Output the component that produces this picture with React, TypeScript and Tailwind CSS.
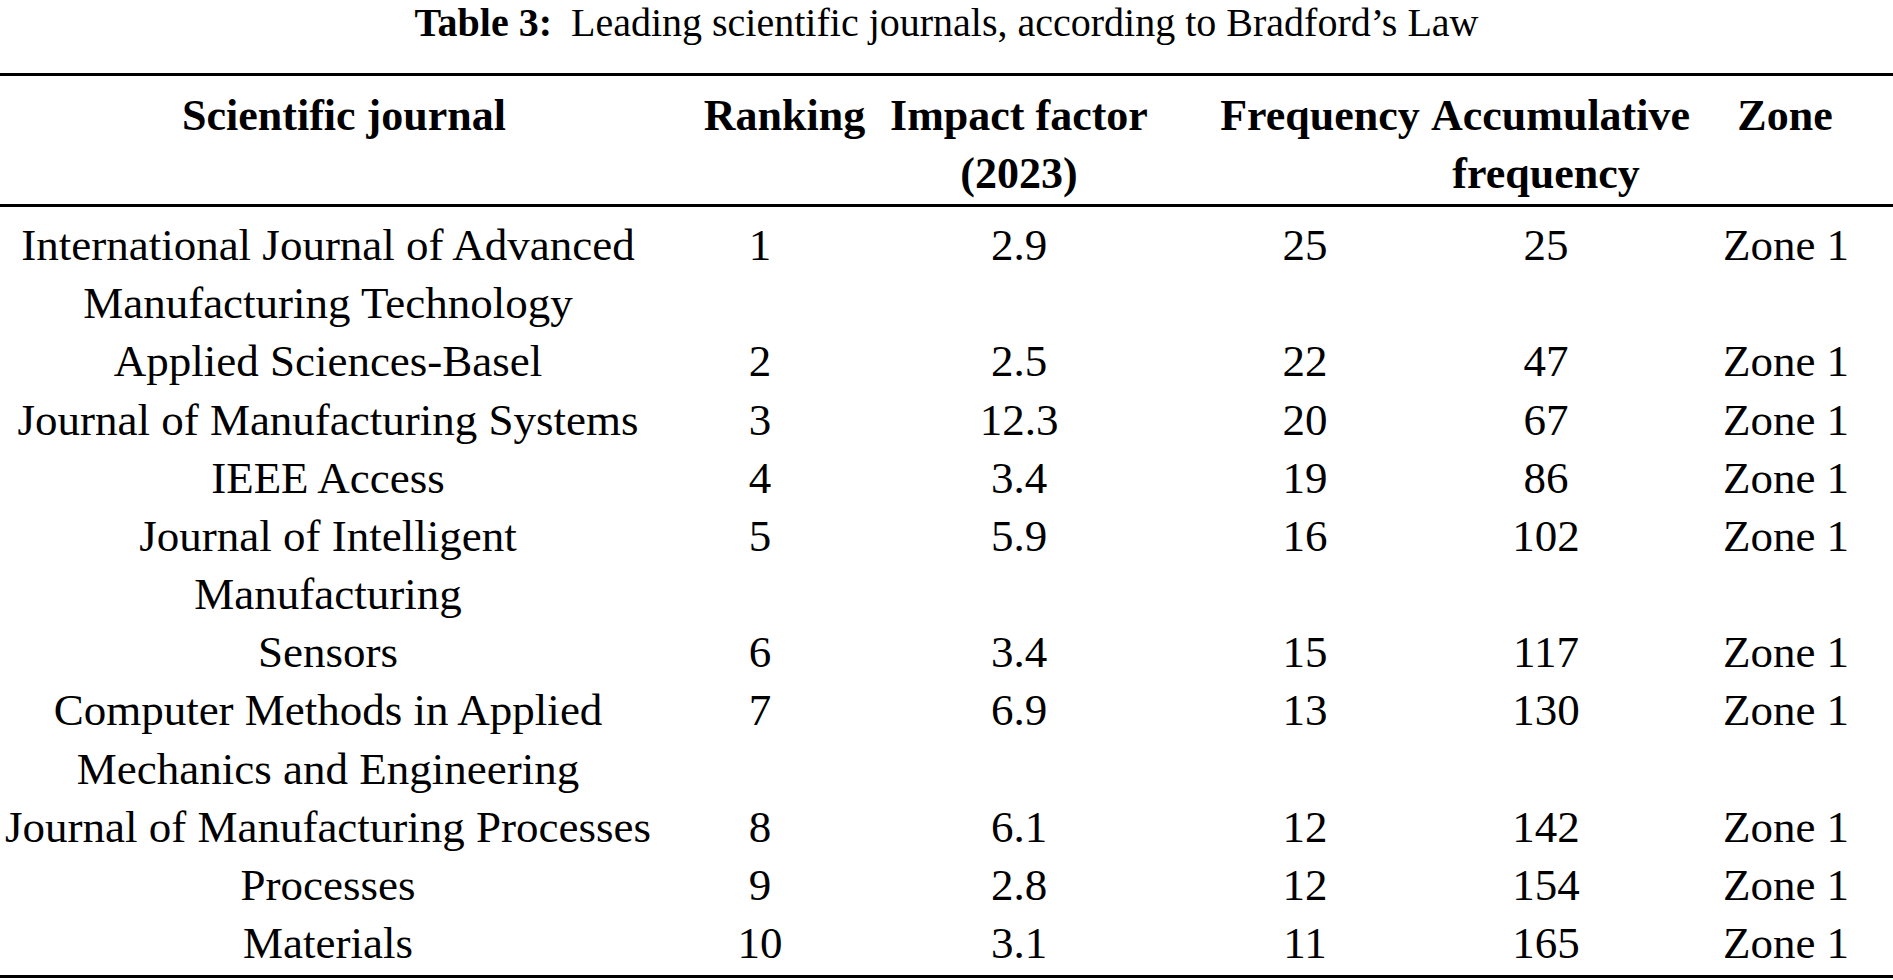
import React from "react";

type Row = {
  journal: string[];
  ranking: string;
  impact: string;
  frequency: string;
  accumulative: string;
  zone: string;
};

const rows: Row[] = [
  { journal: ["International Journal of Advanced", "Manufacturing Technology"], ranking: "1", impact: "2.9", frequency: "25", accumulative: "25", zone: "Zone 1" },
  { journal: ["Applied Sciences-Basel"], ranking: "2", impact: "2.5", frequency: "22", accumulative: "47", zone: "Zone 1" },
  { journal: ["Journal of Manufacturing Systems"], ranking: "3", impact: "12.3", frequency: "20", accumulative: "67", zone: "Zone 1" },
  { journal: ["IEEE Access"], ranking: "4", impact: "3.4", frequency: "19", accumulative: "86", zone: "Zone 1" },
  { journal: ["Journal of Intelligent", "Manufacturing"], ranking: "5", impact: "5.9", frequency: "16", accumulative: "102", zone: "Zone 1" },
  { journal: ["Sensors"], ranking: "6", impact: "3.4", frequency: "15", accumulative: "117", zone: "Zone 1" },
  { journal: ["Computer Methods in Applied", "Mechanics and Engineering"], ranking: "7", impact: "6.9", frequency: "13", accumulative: "130", zone: "Zone 1" },
  { journal: ["Journal of Manufacturing Processes"], ranking: "8", impact: "6.1", frequency: "12", accumulative: "142", zone: "Zone 1" },
  { journal: ["Processes"], ranking: "9", impact: "2.8", frequency: "12", accumulative: "154", zone: "Zone 1" },
  { journal: ["Materials"], ranking: "10", impact: "3.1", frequency: "11", accumulative: "165", zone: "Zone 1" },
];

// column tracks sized so cell centres land where the reference has them
const cols = "grid grid-cols-[656px_208px_310px_262px_220px_237px]";

const Cell = ({ children, className = "" }: { children: React.ReactNode; className?: string }) => (
  <div className={`flex flex-col items-center whitespace-nowrap ${className}`}>{children}</div>
);

export default function App() {
  return (
    <div
      className="w-[1893px] h-[980px] bg-white text-black overflow-hidden"
      style={{ fontFamily: '"Liberation Serif", "Times New Roman", serif' }}
    >
      <div className="h-[45px] text-center text-[40px] leading-[45px] whitespace-nowrap">
        <span className="font-bold">Table 3:</span>
        <span className="ml-[19px]">Leading scientific journals, according to Bradford’s Law</span>
      </div>

      <div className="mt-[28px] border-t-[3px] border-b-[3px] border-black">
        {/* header */}
        <div className={`${cols} border-b-[3px] border-black pt-[11px] pb-[1px] text-[44px] leading-[58px] font-bold`}>
          <Cell className="pl-[32px]">Scientific journal</Cell>
          <Cell className="pl-[49px]">Ranking</Cell>
          <Cell>
            <span>Impact factor</span>
            <span>(2023)</span>
          </Cell>
          <Cell className="pl-[30px]">Frequency</Cell>
          <Cell>
            <span className="pl-[29px]">Accumulative</span>
            <span>frequency</span>
          </Cell>
          <Cell className="pl-[21px]">Zone</Cell>
        </div>

        {/* body */}
        <div className="pt-[9px] pb-[3px] text-[45px] leading-[58.17px]">
          {rows.map((r) => (
            <div key={r.ranking} className={cols}>
              <Cell>
                {r.journal.map((line) => (
                  <span key={line}>{line}</span>
                ))}
              </Cell>
              <Cell>{r.ranking}</Cell>
              <Cell>{r.impact}</Cell>
              <Cell>{r.frequency}</Cell>
              <Cell>{r.accumulative}</Cell>
              <Cell className="pl-[23px]">{r.zone}</Cell>
            </div>
          ))}
        </div>
      </div>
    </div>
  );
}
